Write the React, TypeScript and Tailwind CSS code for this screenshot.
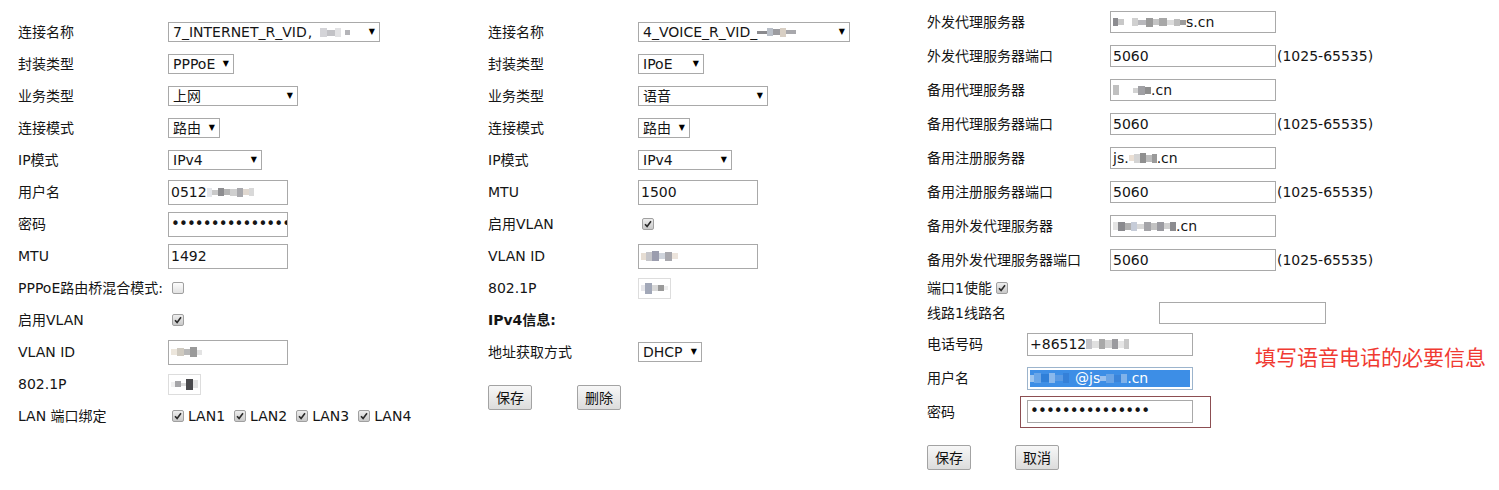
import React from "react";

type Cell = [number, number, string];

// pixelated "blurred" bits of the screenshot
const Mosaic: React.FC<{ cells: Cell[] }> = ({ cells }) => (
  <span className="inline-flex items-center">
    {cells.map(([w, h, c], i) => (
      <span key={i} className="inline-block" style={{ width: w, height: h, background: c }} />
    ))}
  </span>
);

const Select: React.FC<{ className: string; children: React.ReactNode }> = ({ className, children }) => (
  <div className={`flex h-[20px] items-center justify-between border border-[#a9a9a9] bg-white pl-[4px] pr-[4px] ${className}`}>
    <span className="flex items-center whitespace-nowrap leading-none">{children}</span>
    <span className="text-[8px] leading-none text-black">▼</span>
  </div>
);

const Input: React.FC<{ className: string; children?: React.ReactNode }> = ({ className, children }) => (
  <div className={`flex items-center overflow-hidden whitespace-nowrap border border-[#a9a9a9] bg-white pl-[2px] ${className}`}>
    {children}
  </div>
);

const Check: React.FC<{ checked?: boolean }> = ({ checked }) => (
  <span
    className={`inline-flex h-[12px] w-[12px] shrink-0 items-center justify-center rounded-[2px] border border-[#a0a0a0] bg-linear-to-b ${
      checked ? "from-[#eeeeee] to-[#c9c9c9]" : "from-[#fdfdfd] to-[#e2e2e2]"
    }`}
  >
    {checked && (
      <svg viewBox="0 0 12 12" className="h-[10px] w-[10px]">
        <path d="M2.4 6.3 L4.9 8.9 L9.6 2.6" stroke="#2a2a2a" strokeWidth="1.9" fill="none" />
      </svg>
    )}
  </span>
);

const Button: React.FC<{ children: React.ReactNode }> = ({ children }) => (
  <button className="h-[25px] w-[44px] rounded-[2px] border border-[#a3a3a3] bg-linear-to-b from-[#f7f7f7] to-[#dcdcdc] text-[14px] leading-none text-[#111]">
    {children}
  </button>
);

const Dots: React.FC = () => (
  <span className="text-[15px] tracking-[-0.9px] leading-none">•••••••••••••••</span>
);

const Row: React.FC<{ label: React.ReactNode; labelW: string; h?: string; children?: React.ReactNode }> = ({
  label,
  labelW,
  h = "h-8",
  children,
}) => (
  <div className={`flex items-center ${h}`}>
    <div className={`shrink-0 whitespace-nowrap ${labelW}`}>{label}</div>
    {children}
  </div>
);

const range = "(1025-65535)";

export default function App() {
  return (
    <div className="relative h-[490px] w-[1499px] overflow-hidden bg-white font-['DejaVu_Sans','Noto_Sans_CJK_SC',sans-serif] text-[14px] text-[#151515]">
      <div className="flex items-start pl-[18px]">
        {/* internet connection */}
        <div className="w-[470px] shrink-0 pt-[16px]">
          <Row label="连接名称" labelW="w-[150px]">
            <Select className="w-[212px]">
              7_INTERNET_R_VID
              <span className="ml-[1px]">,</span>
              <span className="ml-[8px]">
                <Mosaic cells={[[7, 9, "#d4d4d8"], [8, 6, "#c2c2c6"], [6, 9, "#e2e2e4"], [4, 4, "#fff"], [5, 5, "#b4b4b8"]]} />
              </span>
            </Select>
          </Row>
          <Row label="封装类型" labelW="w-[150px]">
            <Select className="w-[66px]">PPPoE</Select>
          </Row>
          <Row label="业务类型" labelW="w-[150px]">
            <Select className="w-[130px]">上网</Select>
          </Row>
          <Row label="连接模式" labelW="w-[150px]">
            <Select className="w-[52px]">路由</Select>
          </Row>
          <Row label="IP模式" labelW="w-[150px]">
            <Select className="w-[94px]">IPv4</Select>
          </Row>
          <Row label="用户名" labelW="w-[150px]">
            <Input className="h-[25px] w-[120px]">
              0512
              <Mosaic cells={[[5, 9, "#e4e6ea"], [6, 5, "#c9c9c9"], [6, 8, "#8d8d90"], [6, 6, "#b5b5b5"], [7, 7, "#cfcfcf"], [6, 9, "#a9a9ad"], [6, 6, "#e0d8d0"], [5, 8, "#d9d9d9"]]} />
            </Input>
          </Row>
          <Row label="密码" labelW="w-[150px]">
            <Input className="h-[25px] w-[120px]">
              <Dots />
            </Input>
          </Row>
          <Row label="MTU" labelW="w-[150px]">
            <Input className="h-[25px] w-[120px]">1492</Input>
          </Row>
          <Row label="PPPoE路由桥混合模式:" labelW="w-[154px]">
            <Check />
          </Row>
          <Row label="启用VLAN" labelW="w-[154px]">
            <Check checked />
          </Row>
          <Row label="VLAN ID" labelW="w-[150px]">
            <Input className="h-[25px] w-[120px]">
              <Mosaic cells={[[6, 6, "#ece6dc"], [7, 8, "#cfcac0"], [6, 6, "#b8b8b8"], [7, 10, "#9a9a9a"], [5, 5, "#e3e3e3"]]} />
            </Input>
          </Row>
          <Row label="802.1P" labelW="w-[150px]">
            <Input className="h-[21px] w-[33px] border-[#dddddd]">
              <Mosaic cells={[[4, 5, "#f0f0f0"], [6, 6, "#a5a5a8"], [5, 3, "#dcdcdc"], [7, 11, "#4a4a4d"], [5, 8, "#e5e5e5"]]} />
            </Input>
          </Row>
          <Row label="LAN 端口绑定" labelW="w-[154px]">
            <div className="flex items-center">
              {["LAN1", "LAN2", "LAN3", "LAN4"].map((l) => (
                <span key={l} className="mr-[9px] flex items-center gap-[4px]">
                  <Check checked />
                  {l}
                </span>
              ))}
            </div>
          </Row>
        </div>

        {/* voice connection */}
        <div className="w-[439px] shrink-0 pt-[16px]">
          <Row label="连接名称" labelW="w-[150px]">
            <Select className="w-[212px]">
              4_VOICE_R_VID_
              <Mosaic cells={[[10, 3, "#8a8a8e"], [6, 8, "#b9bfc8"], [7, 6, "#9c9ca0"], [6, 9, "#d8cfc4"], [10, 4, "#a8a8ac"]]} />
            </Select>
          </Row>
          <Row label="封装类型" labelW="w-[150px]">
            <Select className="w-[66px]">IPoE</Select>
          </Row>
          <Row label="业务类型" labelW="w-[150px]">
            <Select className="w-[130px]">语音</Select>
          </Row>
          <Row label="连接模式" labelW="w-[150px]">
            <Select className="w-[52px]">路由</Select>
          </Row>
          <Row label="IP模式" labelW="w-[150px]">
            <Select className="w-[94px]">IPv4</Select>
          </Row>
          <Row label="MTU" labelW="w-[150px]">
            <Input className="h-[25px] w-[120px]">1500</Input>
          </Row>
          <Row label="启用VLAN" labelW="w-[154px]">
            <Check checked />
          </Row>
          <Row label="VLAN ID" labelW="w-[150px]">
            <Input className="h-[25px] w-[120px]">
              <Mosaic cells={[[5, 7, "#e6ddd3"], [6, 9, "#c6c6ca"], [7, 10, "#9b9dae"], [6, 6, "#cfd4dc"], [7, 9, "#a8a8ae"], [6, 6, "#ece4dc"]]} />
            </Input>
          </Row>
          <Row label="802.1P" labelW="w-[150px]">
            <Input className="h-[21px] w-[33px] border-[#dddddd]">
              <Mosaic cells={[[4, 6, "#e6e6ea"], [7, 11, "#a2a8b8"], [6, 6, "#d8d8d8"], [6, 6, "#9a9a9a"], [4, 4, "#eeeeee"]]} />
            </Input>
          </Row>
          <Row label={<span className="font-bold">IPv4信息:</span>} labelW="w-[150px]" />
          <Row label="地址获取方式" labelW="w-[150px]">
            <Select className="w-[64px]">DHCP</Select>
          </Row>
          <div className="flex gap-[45px] pt-[17px]">
            <Button>保存</Button>
            <Button>删除</Button>
          </div>
        </div>

        {/* SIP settings */}
        <div className="relative flex-1 pt-[5px]">
          <Row label="外发代理服务器" labelW="w-[183px]" h="h-[34px]">
            <Input className="h-[22px] w-[166px]">
              <Mosaic cells={[[5, 8, "#8c8c90"], [6, 6, "#c8c8c8"], [8, 4, "#ffffff"], [6, 8, "#d0d0d0"], [8, 5, "#b8b8bc"], [7, 9, "#9a9a9a"], [6, 6, "#c4c4c4"], [8, 8, "#a8a8a8"], [7, 5, "#dcdcdc"], [6, 7, "#bdbdbd"], [6, 5, "#9c9c9c"]]} />
              s.cn
            </Input>
          </Row>
          <Row label="外发代理服务器端口" labelW="w-[183px]" h="h-[34px]">
            <Input className="h-[22px] w-[166px]">5060</Input>
            <span className="ml-[1px]">{range}</span>
          </Row>
          <Row label="备用代理服务器" labelW="w-[183px]" h="h-[34px]">
            <Input className="h-[22px] w-[166px]">
              <Mosaic cells={[[6, 10, "#c0c0c0"], [14, 4, "#ffffff"], [5, 5, "#d2d2d2"], [7, 9, "#a0a0a4"], [6, 7, "#8e8e8e"]]} />
              .cn
            </Input>
          </Row>
          <Row label="备用代理服务器端口" labelW="w-[183px]" h="h-[34px]">
            <Input className="h-[22px] w-[166px]">5060</Input>
            <span className="ml-[1px]">{range}</span>
          </Row>
          <Row label="备用注册服务器" labelW="w-[183px]" h="h-[34px]">
            <Input className="h-[22px] w-[166px]">
              js.
              <Mosaic cells={[[5, 6, "#eadfd4"], [6, 9, "#d4d4d4"], [6, 10, "#8f8f8f"], [6, 7, "#bcbcbc"], [5, 9, "#9a9a9a"]]} />
              .cn
            </Input>
          </Row>
          <Row label="备用注册服务器端口" labelW="w-[183px]" h="h-[34px]">
            <Input className="h-[22px] w-[166px]">5060</Input>
            <span className="ml-[1px]">{range}</span>
          </Row>
          <Row label="备用外发代理服务器" labelW="w-[183px]" h="h-[34px]">
            <Input className="h-[22px] w-[166px]">
              <Mosaic cells={[[5, 8, "#e4e4e4"], [7, 9, "#8a8a8e"], [6, 7, "#b0b0b0"], [6, 9, "#c6ccd8"], [7, 5, "#d8d8d8"], [7, 9, "#a4a4a8"], [6, 7, "#c2c2c2"], [7, 9, "#9a9aa0"], [6, 6, "#d0d0d0"], [6, 9, "#8c8c90"]]} />
              .cn
            </Input>
          </Row>
          <Row label="备用外发代理服务器端口" labelW="w-[183px]" h="h-[34px]">
            <Input className="h-[22px] w-[166px]">5060</Input>
            <span className="ml-[1px]">{range}</span>
          </Row>
          <div className="flex h-[22px] items-center gap-[4px]">
            端口1使能
            <Check checked />
          </div>
          <Row label="线路1线路名" labelW="w-[232px]" h="h-[28px]">
            <Input className="h-[22px] w-[167px]" />
          </Row>
          <Row label="电话号码" labelW="w-[100px]" h="h-[34px]">
            <Input className="h-[23px] w-[166px]">
              +86512
              <Mosaic cells={[[6, 10, "#c4c4c8"], [7, 7, "#e0e0e0"], [6, 10, "#a8a8a8"], [7, 8, "#d0d0d0"], [6, 10, "#9a9a9e"], [6, 7, "#e6e6e6"], [5, 10, "#c8c8c8"]]} />
            </Input>
          </Row>
          <Row label="用户名" labelW="w-[100px]" h="h-[34px]">
            <div className="flex h-[23px] w-[166px] items-center overflow-hidden border border-[#9cb4cc] bg-white p-[2px]">
              <div className="flex h-full w-full items-center whitespace-nowrap bg-[#3d8ee6] text-white">
                <Mosaic cells={[[4, 7, "#9cc4ee"], [7, 10, "#6aa6e8"], [8, 8, "#2f7fd8"], [6, 10, "#8ab8ec"], [8, 6, "#5a9ae4"], [6, 10, "#3580d8"]]} />
                <span className="ml-[6px]">@js</span>
                <Mosaic cells={[[6, 5, "#9ac0ee"], [8, 9, "#6aa4e6"], [7, 7, "#3a84da"], [6, 9, "#80b2ea"]]} />
                <span>.cn</span>
              </div>
            </div>
          </Row>
          <Row label="密码" labelW="w-[93px]" h="h-[34px]">
            <div className="border border-[#8c4e52] pb-[4px] pl-[6px] pr-[17px] pt-[3px]">
              <Input className="h-[23px] w-[166px]">
                <Dots />
              </Input>
            </div>
          </Row>
          <div className="flex gap-[44px] pt-[16px]">
            <Button>保存</Button>
            <Button>取消</Button>
          </div>

          <div className="absolute left-[328px] top-[346px] whitespace-nowrap font-['Noto_Sans_CJK_SC',sans-serif] text-[21px] leading-none text-[#f03a32]">
            填写语音电话的必要信息
          </div>
        </div>
      </div>
    </div>
  );
}
